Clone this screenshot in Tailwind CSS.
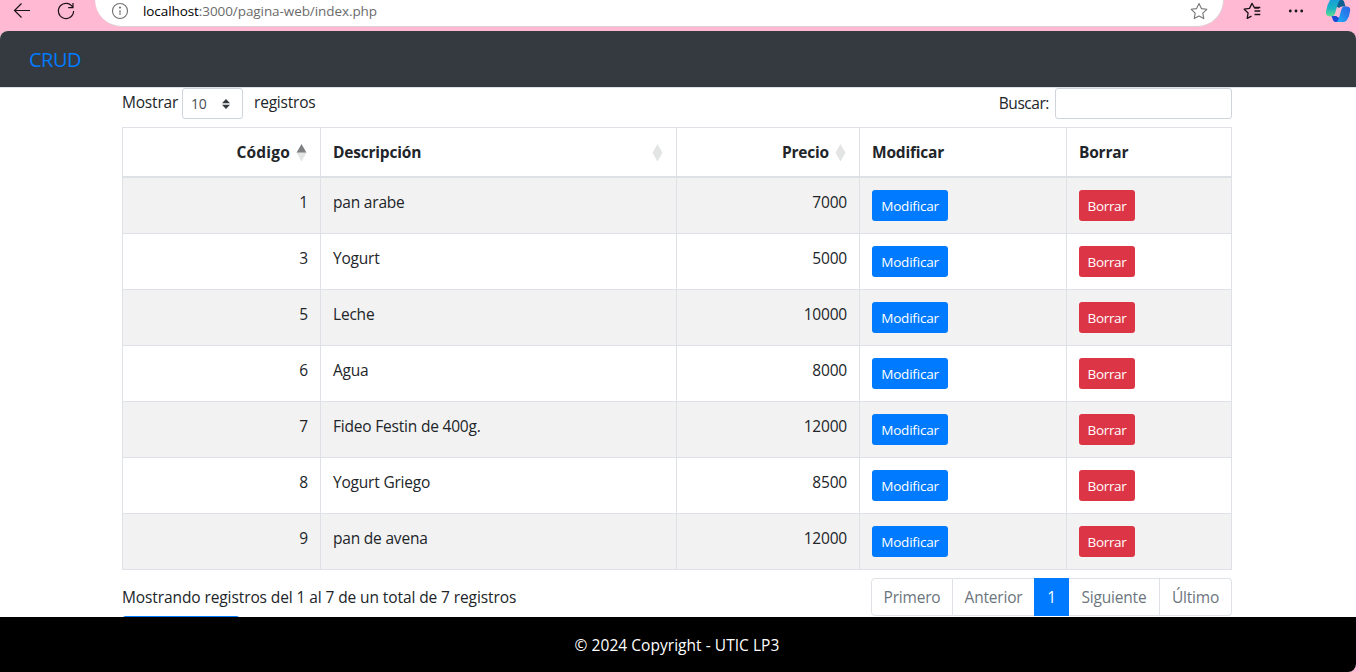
<!DOCTYPE html>
<html lang="es">
<head>
<meta charset="utf-8">
<title>CRUD</title>
<script src="https://cdn.jsdelivr.net/npm/@tailwindcss/browser@4"></script>
</head>
<body class="w-[1359px] h-[672px] overflow-hidden bg-[#ffb9d2] font-['Open_Sans',sans-serif] text-[15.5px] leading-6 tracking-[-0.2px] text-[#212529]">
<div class="flex flex-col h-full">
  <header class="h-[31px] shrink-0 flex items-start">
    <svg class="w-[95px] h-[31px] shrink-0" viewBox="0 0 95 31" fill="none" stroke="#1b1216" stroke-width="1.2">
      <path d="M30 10.5H14.5M21.5 3.5L14.5 10.5L21.5 17.5"/>
      <path d="M72.8 7.5A7.6 7.6 0 1 0 73.6 11M73 3V7.7H68.2"/>
    </svg>
    <div class="w-[1129px] h-[27px] bg-white rounded-b-full border-b border-r border-[#e0d0d6] flex items-start">
      <svg class="w-12 h-[26px] shrink-0" viewBox="0 0 48 26" fill="none" stroke="#6f6f6f" stroke-width="1.1">
        <circle cx="25" cy="11" r="7.5"/><path d="M25 10V15"/><circle cx="25" cy="7.6" r=".5" fill="#6f6f6f"/>
      </svg>
      <div class="text-[13.5px] leading-[22px] tracking-[-0.08px] text-[#6b6b6b] whitespace-nowrap"><span class="text-black">localhost</span>:3000/pagina-web/index.php</div>
      <svg class="w-10 h-[26px] ml-auto shrink-0" viewBox="0 0 40 26" fill="none" stroke="#767676" stroke-width="1.1" stroke-linejoin="round">
        <path d="M16 3.6L18.4 8.6L23.8 9.3L19.8 13.1L20.8 18.6L16 16L11.2 18.6L12.2 13.1L8.2 9.3L13.6 8.6Z"/>
      </svg>
    </div>
    <svg class="w-[135px] h-[31px] shrink-0" viewBox="1224 0 135 31" fill="none">
      <defs>
        <linearGradient id="teal" x1="0" y1="0" x2="0" y2="1"><stop offset="0" stop-color="#189fd8"/><stop offset=".5" stop-color="#19b3c4"/><stop offset="1" stop-color="#5fdc92"/></linearGradient>
        <linearGradient id="blue" x1="1" y1="0" x2="0" y2="1"><stop offset="0" stop-color="#2c63e6"/><stop offset=".5" stop-color="#2585ee"/><stop offset="1" stop-color="#18b4f8"/></linearGradient>
      </defs>
      <path d="M1259 8H1254.6L1252 3.4L1249.5 8.4L1244.2 9.2L1248.1 13L1247.2 18.4L1251.5 16.1M1254.5 7.5H1260.3M1254.5 11H1260.3M1254.5 14.5H1260.3" stroke="#1b1216" stroke-width="1.3" stroke-linejoin="round"/>
      <g fill="#1b1216"><circle cx="1290.3" cy="11" r="1.4"/><circle cx="1296" cy="11" r="1.4"/><circle cx="1301.7" cy="11" r="1.4"/></g>
      <path d="M1337 0H1342.500Q1343.500 0 1344 1.500L1345.500 6.500H1342Q1340 6.500 1339 8L1336 6Z" fill="#0f5f92"/>
      <path d="M1331.500 16H1336L1341 19L1339 22H1335.500Q1333.600 22 1333 20Z" fill="#1c48d8"/>
      <path d="M1330 0H1340Q1338.500 1.500 1337.800 4L1335 13.500Q1334.200 16.200 1331.500 16.200H1329.500Q1325.500 16.200 1326 11.500Q1326.800 5 1330 0Z" fill="url(#teal)"/>
      <path d="M1344 6.500H1346.500Q1350.500 6.500 1350.200 10.500Q1349.600 16 1347 20Q1345.600 22 1343.500 22H1336.500Q1338 21 1338.800 18.500L1341.500 9Q1342.200 6.500 1344 6.500Z" fill="url(#blue)"/>
    </svg>
  </header>
  <div class="w-[1356px] flex-1 min-h-0 bg-white rounded-t-lg rounded-br-lg overflow-hidden flex flex-col">
    <nav class="h-14 shrink-0 bg-[#343a40] flex items-center pl-[29px] pt-px">
      <a class="text-[#007bff] text-[20px] leading-[30px] tracking-[-0.5px]">CRUD</a>
    </nav>
    <main class="flex-1 min-h-0 overflow-hidden border-t border-[#dee2e6] pl-[122px] flex flex-col">
      <div class="w-[1110px] h-[39px] flex items-start shrink-0">
        <span class="w-[60px] pt-[2px]">Mostrar</span>
        <div class="w-[61px] h-[31px] border border-[#ced4da] rounded-[3px] flex items-center pl-2 pr-[12px] justify-between text-[14px] text-[#495057]">10
          <svg class="w-[8px] h-[10px]" viewBox="0 0 8 10" fill="#343a40"><path d="M4 0L0 4.2H8ZM4 10L0 5.800H8Z"/></svg>
        </div>
        <span class="pl-[11px] pt-[2px]">registros</span>
        <span class="ml-auto pt-[3px] pr-[6px] tracking-[-0.45px]">Buscar:</span>
        <div class="w-[177px] h-[31px] border border-[#ced4da] rounded-[3px]"></div>
      </div>
      <table class="w-[1110px] table-fixed border-separate border-spacing-0 border-l border-t border-[#dee2e6] shrink-0">
        <colgroup><col class="w-[198px]"><col class="w-[356px]"><col class="w-[183px]"><col class="w-[207px]"><col class="w-[165px]"></colgroup>
        <thead>
          <tr class="h-[50px] text-left [&>th]:border-r [&>th]:border-b-2 [&>th]:border-[#dee2e6] [&>th]:px-3 [&>th]:py-0">
            <th><div class="flex items-center justify-end gap-[6px] pr-[1px] tracking-[0.2px]">Código<svg class="w-[11px] h-[18px] mt-[2px]" viewBox="0 0 11 18"><path d="M5.500 0L10.500 8.700H.5Z" fill="#7d7f81"/><path d="M5.500 17.500L10.500 8.700H.5Z" fill="#e3e4e4"/></svg></div></th>
            <th><div class="flex items-center justify-between pr-[1px]">Descripción<svg class="w-[11px] h-[18px] mt-[2px]" viewBox="0 0 11 18"><path d="M5.500 0L10.500 8.700L5.500 17.500L.5 8.700Z" fill="#e3e4e4"/></svg></div></th>
            <th><div class="flex items-center justify-end gap-[6px] pr-[1px]">Precio<svg class="w-[11px] h-[18px] mt-[2px]" viewBox="0 0 11 18"><path d="M5.500 0L10.500 8.700L5.500 17.500L.5 8.700Z" fill="#e3e4e4"/></svg></div></th>
            <th>Modificar</th>
            <th>Borrar</th>
          </tr>
        </thead>
        <tbody id="rows"></tbody>
      </table>
      <div class="w-[1110px] flex justify-between pt-2 shrink-0">
        <span class="pt-[7px] tracking-[-0.1px]">Mostrando registros del 1 al 7 de un total de 7 registros</span>
        <div class="h-[38px] flex text-[#6c757d] leading-[37px] text-center">
          <span class="w-[82px] border border-[#dee2e6] rounded-l">Primero</span>
          <span class="w-[81px] border-y border-[#dee2e6]">Anterior</span>
          <span class="w-[35px] bg-[#007bff] text-white pt-px">1</span>
          <span class="w-[91px] border-y border-r border-[#dee2e6]">Siguiente</span>
          <span class="w-[72px] border-y border-r border-[#dee2e6] rounded-r">Último</span>
        </div>
      </div>
      <div class="w-[118px] h-[38px] rounded bg-[#007bff] shrink-0"></div>
    </main>
    <footer class="h-[55px] shrink-0 bg-black text-white text-center leading-[56px] pr-[2px] tracking-[0.04px]">© 2024 Copyright - UTIC LP3</footer>
  </div>
</div>
<script>
const data = [[1,'pan arabe',7000],[3,'Yogurt',5000],[5,'Leche',10000],[6,'Agua',8000],[7,'Fideo Festin de 400g.',12000],[8,'Yogurt Griego',8500],[9,'pan de avena',12000]];
document.getElementById('rows').innerHTML = data.map(([id, name, price]) => `
<tr class="h-14 align-top odd:bg-[#f2f2f2] [&>td]:border-r [&>td]:border-b [&>td]:border-[#dee2e6] [&>td]:px-3 [&>td]:pt-3 [&>td]:pb-0">
<td class="text-right">${id}</td><td>${name}</td><td class="text-right">${price}</td>
<td><button class="block w-[76px] h-[31px] rounded-[3px] bg-[#007bff] text-white text-[13.5px]">Modificar</button></td>
<td><button class="block w-14 h-[31px] rounded-[3px] bg-[#dc3545] text-white text-[13.5px] tracking-[-0.35px]">Borrar</button></td></tr>`).join('');
</script>
</body>
</html>
